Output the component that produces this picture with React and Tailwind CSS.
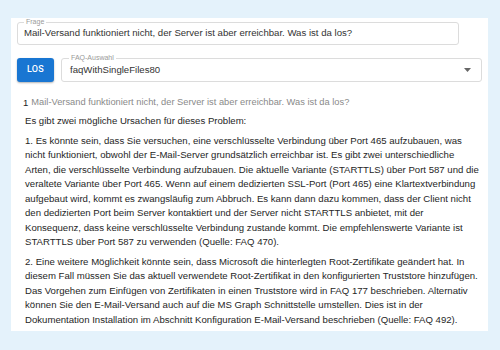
export default function App() {
  return (
    <div className="w-[500px] h-[350px] overflow-hidden bg-[#e4f2fb] pt-[18px] px-[11px] font-['Liberation_Sans',Arial,sans-serif]">
      <div className="bg-white w-[477px] h-[313px] px-[6px] pt-[4px]">
        {/* Frage */}
        <div className="relative w-[442px] h-[23px] border border-[#dcdcdc] rounded-[3px] flex items-center pl-[6px]">
          <span className="absolute -top-[5px] left-[6px] bg-white px-[2px] text-[7px] leading-[8px] text-[#9a9a9a]">Frage</span>
          <span className="text-[9.6px] text-[#333]">Mail-Versand funktioniert nicht, der Server ist aber erreichbar. Was ist da los?</span>
        </div>

        {/* LOS + Auswahl */}
        <div className="flex gap-[7px] mt-[13px]">
          <button className="w-[37px] h-[24px] bg-[#1976d2] rounded-[3px] text-white text-[9px] font-medium font-['Roboto',sans-serif] tracking-[0.3px] shadow-[0_1px_2px_rgba(0,0,0,0.3)]">
            LOS
          </button>
          <div className="relative flex-1 h-[24px] border border-[#dcdcdc] rounded-[3px] flex items-center pl-[8px] pr-[10px]">
            <span className="absolute -top-[5px] left-[7px] bg-white px-[2px] text-[7px] leading-[8px] text-[#9a9a9a]">FAQ-Auswahl</span>
            <span className="flex-1 text-[9.6px] text-[#333]">faqWithSingleFiles80</span>
            <svg width="7" height="4" viewBox="0 0 7 4">
              <path d="M0 0h7L3.5 4z" fill="#666" />
            </svg>
          </div>
        </div>

        {/* Antwort */}
        <div className="mt-[13px] pl-[6px] text-[9.6px] text-[#262626]">
          <div className="flex gap-[3px] leading-[15px]">
            <span className="text-[#1f1f1f]">1</span>
            <span className="text-[#8a8a8a] text-[9.3px]">Mail-Versand funktioniert nicht, der Server ist aber erreichbar. Was ist da los?</span>
          </div>
          <div className="w-[457px] pl-[2px] mt-[4px] leading-[14.5px]">
            <p>Es gibt zwei mögliche Ursachen für dieses Problem:</p>
            <p className="mt-[5px]">
              1. Es könnte sein, dass Sie versuchen, eine verschlüsselte Verbindung über Port 465 aufzubauen, was nicht funktioniert, obwohl der E-Mail-Server grundsätzlich erreichbar ist. Es gibt zwei unterschiedliche Arten, die verschlüsselte Verbindung aufzubauen. Die aktuelle Variante (STARTTLS) über Port 587 und die veraltete Variante über Port 465. Wenn auf einem dedizierten SSL-Port (Port 465) eine Klartextverbindung aufgebaut wird, kommt es zwangsläufig zum Abbruch. Es kann dann dazu kommen, dass der Client nicht den dedizierten Port beim Server kontaktiert und der Server nicht STARTTLS anbietet, mit der Konsequenz, dass keine verschlüsselte Verbindung zustande kommt. Die empfehlenswerte Variante ist STARTTLS über Port 587 zu verwenden (Quelle: FAQ 470).
            </p>
            <p className="mt-[5px]">
              2. Eine weitere Möglichkeit könnte sein, dass Microsoft die hinterlegten Root-Zertifikate geändert hat. In diesem Fall müssen Sie das aktuell verwendete Root-Zertifikat in den konfigurierten Truststore hinzufügen. Das Vorgehen zum Einfügen von Zertifikaten in einen Truststore wird in FAQ 177 beschrieben. Alternativ können Sie den E-Mail-Versand auch auf die MS Graph Schnittstelle umstellen. Dies ist in der Dokumentation Installation im Abschnitt Konfiguration E-Mail-Versand beschrieben (Quelle: FAQ 492).
            </p>
          </div>
        </div>
      </div>
    </div>
  )
}
